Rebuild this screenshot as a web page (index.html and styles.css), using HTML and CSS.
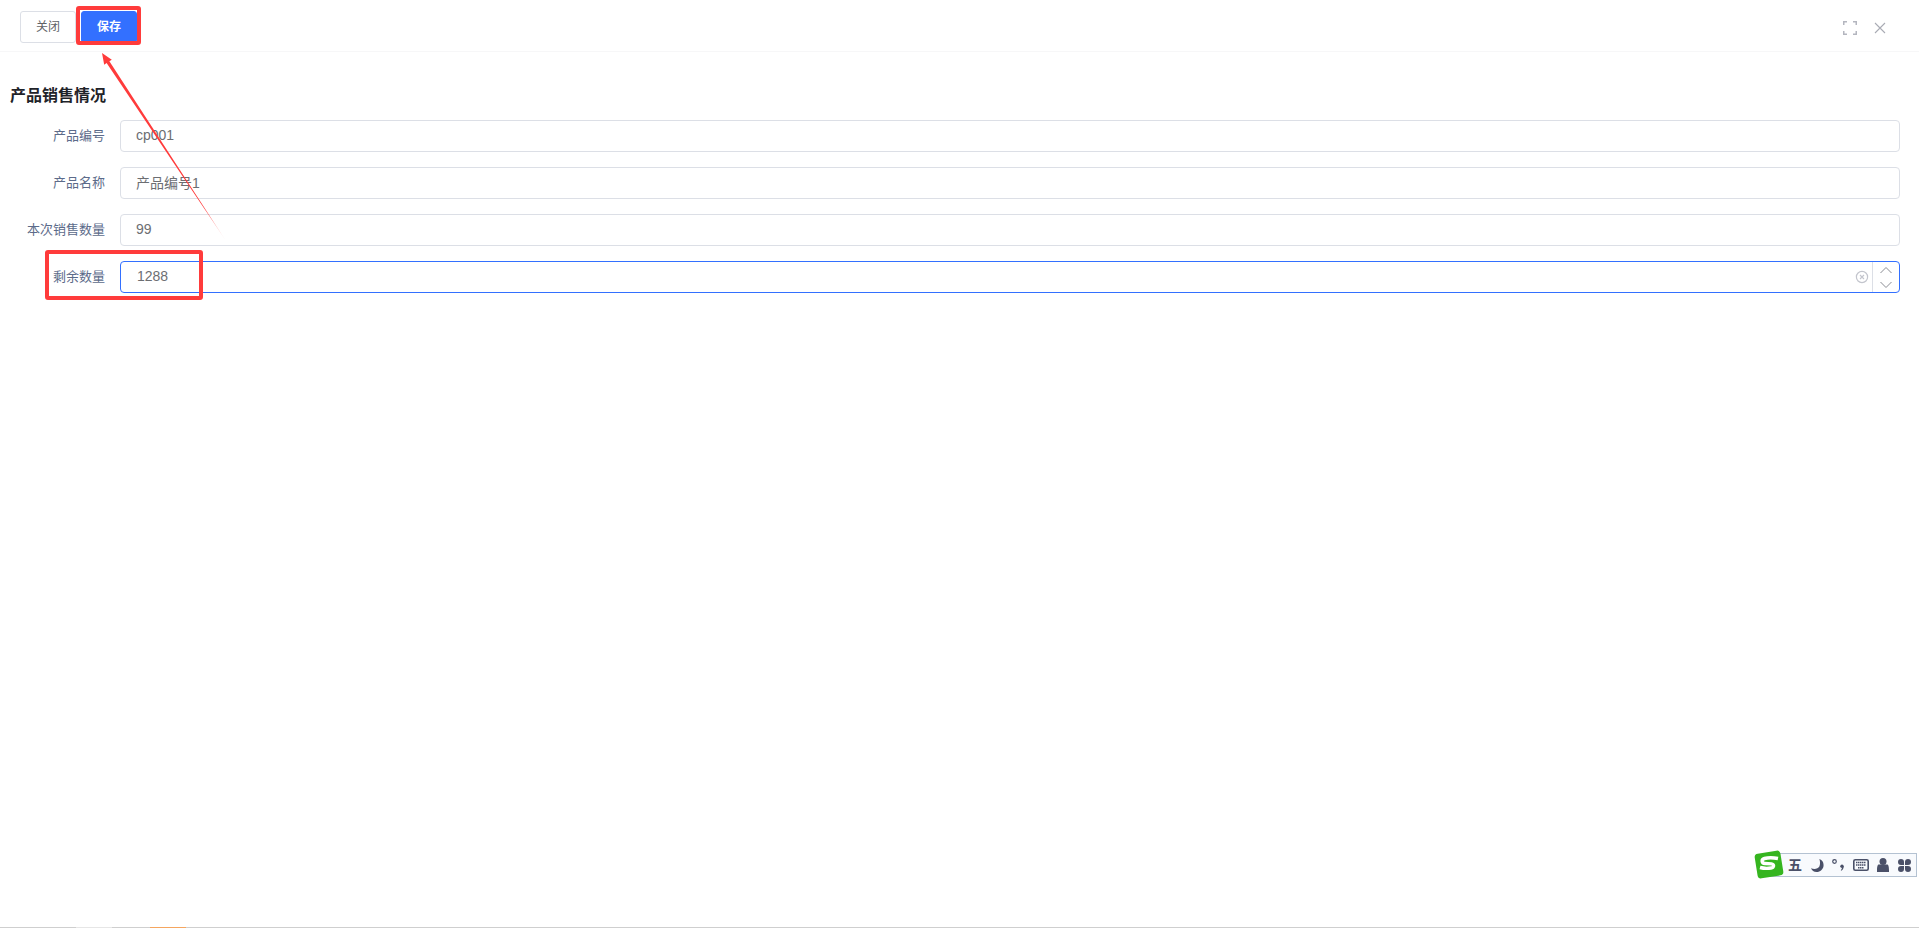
FILE: index.html
```html
<!DOCTYPE html>
<html lang="zh-CN">
<head>
  <meta charset="UTF-8">
  <title>产品销售情况</title>
  <link rel="stylesheet" href="styles.css">
</head>
<body>
  <div class="page">
    <div class="toolbar">
      <div class="toolbar-btns">
        <button class="btn">关闭</button>
        <button class="btn primary">保存</button>
      </div>
      <div class="toolbar-icons">
        <svg width="14" height="14" viewBox="0 0 14 14" fill="none" stroke="#b4b6bf" stroke-width="1.5">
          <path d="M.75 4V.75H4M10 .75h3.25V4M13.25 10v3.25H10M4 13.25H.75V10"/>
        </svg>
        <svg width="12" height="12" viewBox="0 0 12 12" fill="none" stroke="#a9abb4" stroke-width="1.1">
          <path d="M1 1l10 10M11 1L1 11"/>
        </svg>
      </div>
    </div>

    <div class="content">
      <h3 class="title">产品销售情况</h3>
      <div class="form">
        <div class="row">
          <label class="row-label">产品编号</label>
          <div class="field"><input class="field-input" value="cp001"></div>
        </div>
        <div class="row">
          <label class="row-label">产品名称</label>
          <div class="field"><input class="field-input" value="产品编号1"></div>
        </div>
        <div class="row">
          <label class="row-label">本次销售数量</label>
          <div class="field"><input class="field-input" value="99"></div>
        </div>
        <div class="row">
          <label class="row-label">剩余数量</label>
          <div class="field active">
            <input class="field-input number" value="1288">
            <svg class="clear-icon" width="14" height="14" viewBox="0 0 14 14" fill="none" stroke="#c3c5cd">
              <circle cx="7" cy="7" r="5.6" stroke-width="1.2"/>
              <path d="M5 5l4 4M9 5l-4 4" stroke-width="1.1"/>
            </svg>
            <div class="stepper">
              <svg width="14" height="8" viewBox="0 0 14 8" fill="none" stroke="#8b8d94"><path d="M1.5 7L7 1.5 12.5 7"/></svg>
              <svg width="14" height="8" viewBox="0 0 14 8" fill="none" stroke="#8b8d94"><path d="M1.5 1L7 6.5 12.5 1"/></svg>
            </div>
          </div>
        </div>
      </div>
    </div>

    <div class="taskbar">
      <span class="tab light"></span>
      <span class="tab orange"></span>
    </div>
  </div>

  <!-- markup drawn on top of the screenshot -->
  <div class="mark mark-save"></div>
  <div class="mark mark-left"></div>
  <svg class="arrow" width="150" height="210" viewBox="0 0 150 210">
    <defs>
      <linearGradient id="fade" gradientUnits="userSpaceOnUse" x1="1" y1="2" x2="125" y2="191">
        <stop offset="0" stop-color="#ff3b3b"/>
        <stop offset="0.82" stop-color="#ff3b3b"/>
        <stop offset="1" stop-color="#ff3b3b" stop-opacity="0"/>
      </linearGradient>
    </defs>
    <path d="M1 2L10.8 8.7 8.4 10.3 125.5 190.7 5.6 12.1 3.2 13.7Z" fill="url(#fade)"/>
  </svg>

  <div class="ime">
    <svg class="ime-logo" width="30" height="29" viewBox="0 0 30 29">
      <rect x="2" y="2" width="26" height="25" rx="3.5" fill="#35b51f" transform="rotate(-9 15 14.5)"/>
      <path d="M24 8.5c-3-.6-10-1-13.500 0-3.500 1-3 4.800.5 5l6.500.4c3 .3 2.700 3.600-.5 4.100-3 .5-8 .3-11-.5" fill="none" stroke="#fff" stroke-width="3.4"/>
    </svg>
    <span class="ime-char">五</span>
    <svg width="13" height="13" viewBox="0 0 14 14"><path d="M9 0c3 1 5 4 4.500 7.500C13 11 10 14 6 14c-3 0-5-1.500-6-4 4 1.500 7.500.5 9-2 1-2 1-5 0-8z" fill="#4a5068"/></svg>
    <svg width="12" height="12" viewBox="0 0 12 12">
      <circle cx="2.5" cy="2.5" r="1.8" fill="none" stroke="#4a5068" stroke-width="1.2"/>
      <circle cx="10" cy="7.300" r="1.700" fill="#4a5068"/>
      <path d="M11.600 7.300c.2 2-.8 3.700-2.400 4.500l-.4-.6c.8-.8 1.200-1.700 1.200-2.700z" fill="#4a5068"/>
    </svg>
    <svg width="16" height="12" viewBox="0 0 16 12">
      <rect x="0.8" y="0.8" width="14.400" height="10.400" rx="1.500" fill="none" stroke="#4a5068" stroke-width="1.6"/>
      <path d="M3 3.500h10M3 6h10M5 8.700h6" stroke="#4a5068" stroke-width="1.5" stroke-dasharray="1.500 .5"/>
    </svg>
    <svg width="12" height="14" viewBox="0 0 12 14"><circle cx="6" cy="3.500" r="3.500" fill="#4a5068"/><path d="M0 14c0-1-.2-7 1.500-7.500h9C12.200 7 12 13 12 14z" fill="#4a5068"/></svg>
    <svg width="13" height="13" viewBox="0 0 13 13" fill="#4a5068">
      <path d="M6 6H3a3 3 0 1 1 3-3zM7 6V3a3 3 0 1 1 3 3zM6 7v3a3 3 0 1 1-3-3zM7 7h3a3 3 0 1 1-3 3z"/>
    </svg>
  </div>
</body>
</html>
```

FILE: styles.css
```css
* {
  box-sizing: border-box;
}
html, body {
  height: 100%;
}
body {
  margin: 0;
  background: white;
  font-family: "Liberation Sans", "Noto Sans CJK SC", sans-serif;
  overflow: hidden;
}
.page {
  height: 100%;
  display: flex;
  flex-direction: column;
}
.toolbar {
  height: 52px;
  flex: none;
  display: flex;
  align-items: flex-start;
  justify-content: space-between;
  padding: 11px 33px 0 20px;
  border-bottom: 1px solid #f7f7f8;
}
.toolbar-btns {
  display: flex;
  gap: 5px;
}
.btn {
  width: 56px;
  height: 32px;
  padding: 0 0 4px;
  font: 12px "Liberation Sans", "Noto Sans CJK SC", sans-serif;
  color: #606266;
  background: white;
  border: 1px solid #dcdfe6;
  border-radius: 3px;
}
.primary {
  color: white;
  font-weight: bold;
  background: #3370ff;
  border-color: #3370ff;
}
.toolbar-icons {
  display: flex;
  align-items: center;
  gap: 17px;
  padding-top: 10px;
}
.content {
  flex: 1;
  padding: 0 19px 0 10px;
}
.title {
  margin: 34px 0 0;
  height: 20px;
  line-height: 20px;
  font-size: 16px;
  font-weight: bold;
  color: #1f2329;
}
.form {
  margin-top: 14px;
  display: flex;
  flex-direction: column;
  gap: 15px;
}
.row {
  display: flex;
  align-items: center;
  height: 32px;
}
.row-label {
  width: 95px;
  flex: none;
  padding-bottom: 4px;
  text-align: right;
  font-size: 13px;
  color: #5c6b8a;
}
.field {
  flex: 1;
  height: 32px;
  margin-left: 15px;
  display: flex;
  align-items: center;
  border: 1px solid #dcdfe6;
  border-radius: 4px;
}
.field-input {
  flex: 1;
  min-width: 0;
  height: 100%;
  padding: 0 15px 2px;
  border: none;
  outline: none;
  background: transparent;
  font: 14px "Liberation Sans", "Noto Sans CJK SC", sans-serif;
  color: #6c6e72;
}
.number {
  padding-left: 16px;
}
.active {
  border-color: #3370ff;
}
.clear-icon {
  flex: none;
  margin-right: 3px;
}
.stepper {
  flex: none;
  width: 27px;
  height: 100%;
  display: flex;
  flex-direction: column;
  align-items: center;
  justify-content: center;
  gap: 7px;
  border-left: 1px solid #dcdfe6;
}
.taskbar {
  height: 1px;
  flex: none;
  display: flex;
  background: #cfcfcf;
  padding-left: 76px;
}
.tab {
  width: 36px;
}
.light {
  background: #e6e6e6;
}
.orange {
  background: #f5a660;
  margin-left: 38px;
}
.mark {
  position: absolute;
  border: 4px solid #ff3b3b;
  border-radius: 3px;
}
.mark-save {
  left: 76px;
  top: 6px;
  width: 65px;
  height: 39px;
}
.mark-left {
  left: 45px;
  top: 250px;
  width: 158px;
  height: 50px;
}
.arrow {
  position: absolute;
  left: 101px;
  top: 51px;
}
.ime {
  position: absolute;
  left: 1770px;
  top: 853px;
  width: 147px;
  height: 24px;
  display: flex;
  align-items: center;
  gap: 8.6px;
  padding-left: 17px;
  background: #f8fafd;
  border: 1px solid #b4c2d2;
  color: #4a5068;
}
.ime-logo {
  position: absolute;
  left: -17px;
  top: -4px;
}
.ime-char {
  font-size: 14px;
  font-weight: bold;
  line-height: 1;
}
```
